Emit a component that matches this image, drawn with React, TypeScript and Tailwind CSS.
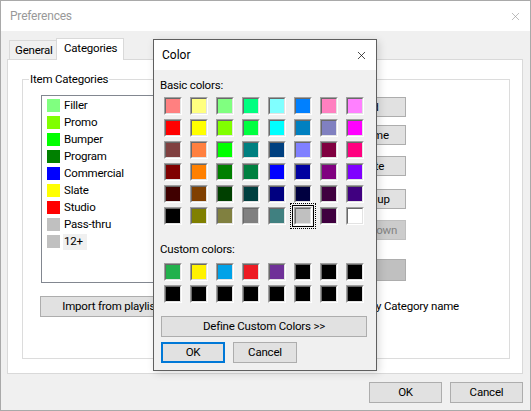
import { X } from "lucide-react";

const categories = [
  { name: "Filler", color: "#80ff80" },
  { name: "Promo", color: "#80ff00" },
  { name: "Bumper", color: "#00ff00" },
  { name: "Program", color: "#008000" },
  { name: "Commercial", color: "#0000ff" },
  { name: "Slate", color: "#ffff00" },
  { name: "Studio", color: "#ff0000" },
  { name: "Pass-thru", color: "#c0c0c0" },
  { name: "12+", color: "#c0c0c0" },
];

const basicColors = [
  "#ff8080", "#ffff80", "#80ff80", "#00ff80", "#80ffff", "#0080ff", "#ff80c0", "#ff80ff",
  "#ff0000", "#ffff00", "#80ff00", "#00ff40", "#00ffff", "#0080c0", "#8080c0", "#ff00ff",
  "#804040", "#ff8040", "#00ff00", "#008080", "#004080", "#8080ff", "#800040", "#ff0080",
  "#800000", "#ff8000", "#008000", "#008040", "#0000ff", "#0000a0", "#800080", "#8000ff",
  "#400000", "#804000", "#004000", "#004040", "#000080", "#000040", "#400040", "#400080",
  "#000000", "#808000", "#808040", "#808080", "#408080", "#c0c0c0", "#400040", "#ffffff",
];

const customColors = [
  "#22b14c", "#fff200", "#00a2e8", "#ed1c24", "#6f3198", "#000000", "#000000", "#000000",
  "#000000", "#000000", "#000000", "#000000", "#000000", "#000000", "#000000", "#000000",
];

function Swatch({ color, selected }: { color: string; selected?: boolean }) {
  return (
    <div className="relative h-[18px] w-[18px]">
      <div className="h-full w-full border border-b-white border-l-[#a0a0a0] border-r-white border-t-[#a0a0a0]">
        <div className="h-full w-full border border-b-[#e3e3e3] border-l-[#696969] border-r-[#e3e3e3] border-t-[#696969]">
          <div className="h-full w-full" style={{ backgroundColor: color }} />
        </div>
      </div>
      {selected ? (
        <>
          <div className="absolute -inset-[2px] border border-black" />
          <div className="absolute -inset-[4px] border border-dotted border-black" />
        </>
      ) : null}
    </div>
  );
}

function WinButton({
  children,
  className = "",
  disabled,
}: {
  children: React.ReactNode;
  className?: string;
  disabled?: boolean;
}) {
  return (
    <button
      className={`flex items-center justify-center border ${
        disabled
          ? "border-[#bfbfbf] bg-[#cccccc] text-[#838383]"
          : "border-[#adadad] bg-[#e1e1e1] text-black"
      } ${className}`}
      type="button"
    >
      {children}
    </button>
  );
}

function ColorDialog() {
  return (
    <div className="absolute left-[152px] top-[38px] flex h-[332px] w-[224px] flex-col border border-[#5f5f5f] bg-[#f0f0f0] shadow-[2px_2px_8px_rgba(0,0,0,0.15)]">
      <div className="flex h-[30px] items-center justify-between bg-white pl-[8px] pr-[8px]">
        <span className="text-[12px] tracking-normal text-black">Color</span>
        <X className="h-[13px] w-[13px] text-black" strokeWidth={1.3} />
      </div>
      <div className="flex flex-col pl-[6px] pt-[8px]">
        <span>Basic colors:</span>
        <div className="ml-[4px] mt-[4px] grid grid-cols-[repeat(8,18px)] gap-x-[8px] gap-y-[4px]">
          {basicColors.map((color, i) => (
            <Swatch color={color} key={i} selected={i === 45} />
          ))}
        </div>
        <span className="mt-[17px]">Custom colors:</span>
        <div className="ml-[4px] mt-[6px] grid grid-cols-[repeat(8,18px)] gap-x-[8px] gap-y-[4px]">
          {customColors.map((color, i) => (
            <Swatch color={color} key={i} />
          ))}
        </div>
        <WinButton className="ml-[1px] mt-[13px] h-[21px] w-[206px]">
          Define Custom Colors &gt;&gt;
        </WinButton>
        <div className="ml-[1px] mt-[5px] flex gap-[8px]">
          <WinButton className="h-[21px] w-[64px] !border-2 !border-[#0078d7]">OK</WinButton>
          <WinButton className="h-[21px] w-[64px]">Cancel</WinButton>
        </div>
      </div>
    </div>
  );
}

export default function App() {
  return (
    <div className="relative flex h-[411px] w-[531px] flex-col border border-[#a9a9a9] bg-[#f0f0f0] font-['Roboto','Noto_Sans',sans-serif] text-[11.5px] leading-[15px] tracking-[-0.2px] text-black">
      <div className="flex h-[30px] shrink-0 items-center justify-between bg-white pl-[9px] pr-[8px]">
        <span className="text-[12px] text-[#999999]">Preferences</span>
        <X className="h-[13px] w-[13px] text-[#999999]" strokeWidth={1.2} />
      </div>

      <div className="ml-[6px] mt-[7px] flex items-end pl-[2px]">
        <div className="flex h-[19px] w-[48px] items-center border border-b-0 border-[#d9d9d9] pl-[5px]">
          General
        </div>
        <div className="relative z-10 -mb-px -ml-px flex h-[22px] w-[68px] items-center border border-b-0 border-[#d9d9d9] bg-white pb-[2px] pl-[7px]">
          Categories
        </div>
      </div>

      <div className="ml-[6px] h-[315px] w-[516px] border border-[#d9d9d9] bg-white pl-[14px] pt-[19px]">
        <div className="relative h-[280px] w-[488px] border border-[#dcdcdc] pl-[18px] pt-[15px]">
          <span className="absolute -top-[8px] left-[6px] bg-white px-[1px]">Item Categories</span>

          <div className="flex">
            <div className="h-[188px] w-[220px] border border-[#828790] pl-[5px] pt-px">
              {categories.map((c) => (
                <div className="flex h-[17px] items-center" key={c.name}>
                  <div className="mr-[3px] h-[13px] w-[13px]" style={{ backgroundColor: c.color }} />
                  {c.name === "12+" ? (
                    <span className="flex h-[16px] items-center bg-[#f0f0f0] pl-px pr-[4px]">12+</span>
                  ) : (
                    <span className="pl-px">{c.name}</span>
                  )}
                </div>
              ))}
            </div>

            <div className="ml-[70px] flex w-[75px] flex-col pt-[2px]">
              <WinButton className="h-[20px]">Add</WinButton>
              <WinButton className="mt-[8px] h-[20px]">Rename</WinButton>
              <WinButton className="mt-[11px] h-[20px]">Delete</WinButton>
              <WinButton className="mt-[13px] h-[20px]">Move up</WinButton>
              <WinButton className="mt-[11px] h-[20px]" disabled>
                Move down
              </WinButton>
              <div className="mt-[19px] h-[22px] border border-[#adadad] bg-[#c0c0c0]" />
            </div>
          </div>

          <div className="mt-[13px] flex items-center pr-[50px]">
            <WinButton className="-ml-px h-[21px] w-[141px]">Import from playlist</WinButton>
            <label className="ml-auto flex items-center gap-[4px]">
              <span className="h-[13px] w-[13px] border border-[#333] bg-white" />
              Sort by Category name
            </label>
          </div>
        </div>
      </div>

      <div className="mt-[8px] flex justify-end gap-[8px] pr-[7px]">
        <WinButton className="h-[21px] w-[73px]">OK</WinButton>
        <WinButton className="h-[21px] w-[73px]">Cancel</WinButton>
      </div>

      <ColorDialog />
    </div>
  );
}
